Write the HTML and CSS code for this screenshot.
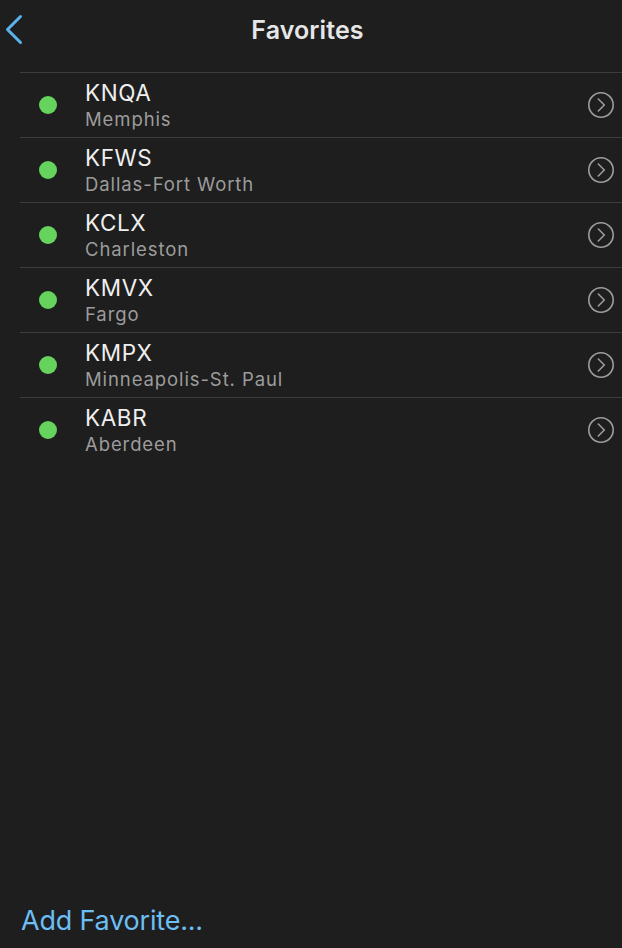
FILE: index.html
```html
<!DOCTYPE html>
<html lang="en">
<head>
  <meta charset="UTF-8" />
  <title>Favorites</title>
  <link rel="stylesheet" href="styles.css">
</head>
<body>
  <header class="topbar">
    <button class="back" aria-label="Back">
      <svg width="20" height="32" viewBox="0 0 20 32"><path d="M16.5 2.5 L3.5 15.5 L16.5 28.5" fill="none" stroke="#5bb3ee" stroke-width="3" stroke-linecap="round" stroke-linejoin="round"/></svg>
    </button>
    <h1>Favorites</h1>
  </header>

  <ul class="list">
    <li class="row">
      <span class="dot"></span>
      <div class="info"><div class="code">KNQA</div><div class="city">Memphis</div></div>
      <span class="more"><svg width="28" height="28" viewBox="0 0 28 28"><circle cx="14" cy="14" r="12.2" fill="none" stroke="#9d9d9d" stroke-width="1.6"/><path d="M11.3 8 L17.3 14 L11.3 20" fill="none" stroke="#9d9d9d" stroke-width="1.6" stroke-linecap="round" stroke-linejoin="round"/></svg></span>
    </li>
    <li class="row">
      <span class="dot"></span>
      <div class="info"><div class="code">KFWS</div><div class="city">Dallas-Fort Worth</div></div>
      <span class="more"><svg width="28" height="28" viewBox="0 0 28 28"><circle cx="14" cy="14" r="12.2" fill="none" stroke="#9d9d9d" stroke-width="1.6"/><path d="M11.3 8 L17.3 14 L11.3 20" fill="none" stroke="#9d9d9d" stroke-width="1.6" stroke-linecap="round" stroke-linejoin="round"/></svg></span>
    </li>
    <li class="row">
      <span class="dot"></span>
      <div class="info"><div class="code">KCLX</div><div class="city">Charleston</div></div>
      <span class="more"><svg width="28" height="28" viewBox="0 0 28 28"><circle cx="14" cy="14" r="12.2" fill="none" stroke="#9d9d9d" stroke-width="1.6"/><path d="M11.3 8 L17.3 14 L11.3 20" fill="none" stroke="#9d9d9d" stroke-width="1.6" stroke-linecap="round" stroke-linejoin="round"/></svg></span>
    </li>
    <li class="row">
      <span class="dot"></span>
      <div class="info"><div class="code">KMVX</div><div class="city">Fargo</div></div>
      <span class="more"><svg width="28" height="28" viewBox="0 0 28 28"><circle cx="14" cy="14" r="12.2" fill="none" stroke="#9d9d9d" stroke-width="1.6"/><path d="M11.3 8 L17.3 14 L11.3 20" fill="none" stroke="#9d9d9d" stroke-width="1.6" stroke-linecap="round" stroke-linejoin="round"/></svg></span>
    </li>
    <li class="row">
      <span class="dot"></span>
      <div class="info"><div class="code">KMPX</div><div class="city">Minneapolis-St. Paul</div></div>
      <span class="more"><svg width="28" height="28" viewBox="0 0 28 28"><circle cx="14" cy="14" r="12.2" fill="none" stroke="#9d9d9d" stroke-width="1.6"/><path d="M11.3 8 L17.3 14 L11.3 20" fill="none" stroke="#9d9d9d" stroke-width="1.6" stroke-linecap="round" stroke-linejoin="round"/></svg></span>
    </li>
    <li class="row">
      <span class="dot"></span>
      <div class="info"><div class="code">KABR</div><div class="city">Aberdeen</div></div>
      <span class="more"><svg width="28" height="28" viewBox="0 0 28 28"><circle cx="14" cy="14" r="12.2" fill="none" stroke="#9d9d9d" stroke-width="1.6"/><path d="M11.3 8 L17.3 14 L11.3 20" fill="none" stroke="#9d9d9d" stroke-width="1.6" stroke-linecap="round" stroke-linejoin="round"/></svg></span>
    </li>
  </ul>

  <footer class="bottom">
    <a href="#" class="add">Add Favorite...</a>
  </footer>
</body>
</html>
```

FILE: styles.css
```css
html, body {
  height: 100%;
}
body {
  margin: 0;
  background: #1e1e1e;
  font-family: Inter, "Noto Sans", sans-serif;
  color: #ececec;
  display: flex;
  flex-direction: column;
}
.topbar {
  height: 72px;
  display: flex;
  align-items: flex-start;
  justify-content: center;
  padding-right: 7px;
  position: relative;
}
.topbar h1 {
  margin: 0;
  padding-top: 15px;
  font-size: 25px;
  font-weight: 600;
  letter-spacing: 0.1px;
  color: #e6e6e6;
}
.back {
  position: absolute;
  left: 4px;
  top: 14px;
  background: none;
  border: none;
  padding: 0;
  cursor: pointer;
}
.list {
  list-style: none;
  margin: 0 0 0 20px;
  padding: 0;
  border-top: 1px solid #3d3d3d;
}
.row {
  display: flex;
  align-items: center;
  height: 64px;
  border-bottom: 1px solid #3d3d3d;
}
.row:last-child {
  border-bottom: none;
}
.dot {
  width: 18px;
  height: 18px;
  border-radius: 50%;
  background: #66d35c;
  margin-left: 19px;
  margin-right: 28px;
}
.info {
  flex: 1;
  padding-top: 1px;
}
.code {
  font-size: 22.5px;
  line-height: 26px;
  letter-spacing: 0.6px;
  color: #efefef;
}
.city {
  font-size: 18.5px;
  line-height: 26px;
  letter-spacing: 0.9px;
  color: #9c9c9c;
}
.more {
  display: flex;
  margin-right: 7px;
}
.bottom {
  margin-top: auto;
  padding: 0 0 11px 21px;
}
.add {
  font-size: 27px;
  letter-spacing: -0.2px;
  color: #6cbef3;
  text-decoration: none;
}
```
